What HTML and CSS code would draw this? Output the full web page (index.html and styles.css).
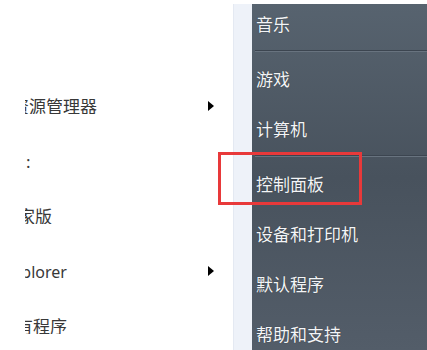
FILE: index.html
```html
<!DOCTYPE html>
<html lang="zh-cn">
<head>
  <meta charset="UTF-8">
  <meta name="viewport" content="width=device-width, initial-scale=1.0">
  <title>开始菜单</title>
  <link rel="stylesheet" href="styles.css">
</head>
<body>
  <div class="left">
    <div class="left-item">
      <div class="label"><span class="cut-zi">资源管理器</span></div>
      <span class="arrow"></span>
    </div>
    <div class="left-item">
      <div class="label"><span class="cut-colon">:</span></div>
    </div>
    <div class="left-item">
      <div class="label"><span class="cut-jia">家版</span></div>
    </div>
    <div class="left-item">
      <div class="label"><span class="cut-ex">Explorer</span></div>
      <span class="arrow"></span>
    </div>
    <div class="left-item">
      <div class="label"><span class="cut-all">所有程序</span></div>
    </div>
  </div>

  <div class="right">
    <div class="strip"></div>
    <ul class="panel">
      <li class="first">音乐</li>
      <li class="sep"></li>
      <li>游戏</li>
      <li>计算机</li>
      <li class="sep"></li>
      <li>控制面板</li>
      <li>设备和打印机</li>
      <li>默认程序</li>
      <li>帮助和支持</li>
    </ul>
  </div>

  <div class="mark"></div>
</body>
</html>
```

FILE: styles.css
```css
* {
  margin: 0;
  padding: 0;
  box-sizing: border-box;
}

html, body {
  width: 427px;
  height: 350px;
}

body {
  position: relative;
  display: flex;
  overflow: hidden;
  background-color: #fff;
  font-family: "Noto Sans CJK SC", "Noto Sans", sans-serif;
  font-size: 17px;
  line-height: 1;
}

.left {
  width: 233px;
  padding: 78px 19px 0 25px;
  background-color: #fff;
  color: #383838;
}

.left-item {
  display: flex;
  align-items: center;
  justify-content: space-between;
  height: 55px;
}

.label {
  flex: 1;
  overflow: hidden;
  white-space: nowrap;
}

.label span {
  display: inline-block;
}

.cut-zi {
  margin-left: -13px;
}

.cut-colon {
  margin-left: 1px;
  font-family: "Noto Sans", sans-serif;
}

.cut-jia {
  margin-left: -7px;
}

.cut-ex {
  margin-left: -21px;
  font-family: "Noto Sans", sans-serif;
  font-size: 16px;
}

.cut-all {
  margin-left: -26px;
}

.arrow {
  width: 0;
  height: 0;
  border-left: 6px solid #000;
  border-top: 5px solid transparent;
  border-bottom: 5px solid transparent;
}

.right {
  flex: 1;
  display: flex;
  margin-top: 4px;
}

.strip {
  width: 19px;
  background-color: #eef2f9;
  border-left: 1px solid #e4e9f2;
}

.panel {
  flex: 1;
  list-style: none;
  padding-left: 4px;
  background: linear-gradient(to bottom, #57636f, #48525d 50%, #535d69);
  color: #f3f5f7;
  text-shadow: 0 0 1px rgba(0, 0, 0, .5);
}

.panel li {
  display: flex;
  align-items: center;
  height: 50px;
}

.panel li.first {
  height: 44px;
  padding-bottom: 6px;
}

.panel li.sep {
  height: 5px;
  margin-left: -1px;
}

.panel li.sep::before {
  content: '';
  flex: 1;
  height: 1px;
  background-color: #3c4550;
  box-shadow: 0 1px 0 #68737f;
}

.mark {
  position: absolute;
  left: 218px;
  top: 152px;
  width: 144px;
  height: 53px;
  border: 3px solid #e8393a;
}
```
